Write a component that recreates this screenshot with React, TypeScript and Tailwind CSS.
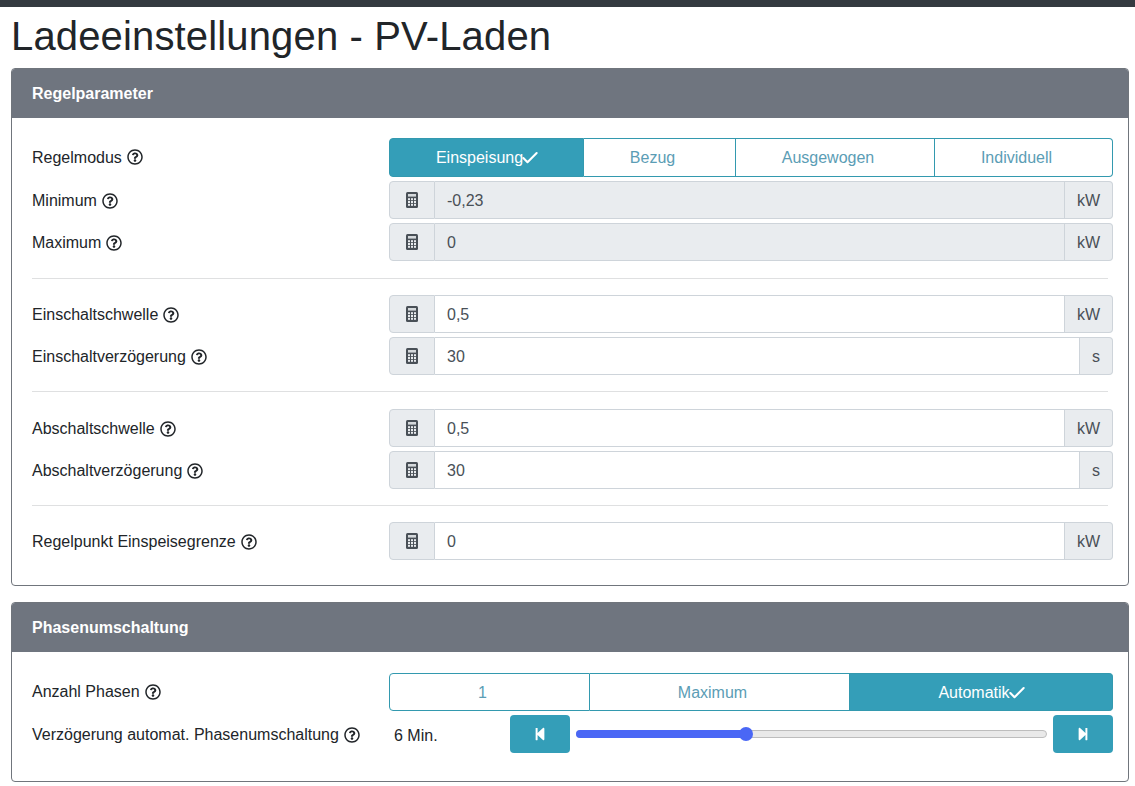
import React from 'react'
import { Check } from 'lucide-react'
import { FaRegQuestionCircle, FaStepBackward, FaStepForward } from 'react-icons/fa'

const Label = ({ text, nudge }: { text: string; nudge?: boolean }) => (
  <div className={`w-[357px] shrink-0 flex items-center gap-[5px] text-[16px] text-[#212529] ${nudge ? 'pt-[2px]' : ''}`}>
    <span>{text}</span>
    <FaRegQuestionCircle size={16} className="text-[#212529] -mt-[1px]" />
  </div>
)

const CalcIcon = () => (
  <svg width="12" height="16" viewBox="0 0 12 16">
    <rect width="12" height="16" rx="1.5" fill="#495057" />
    <rect x="2" y="2" width="8" height="2.6" fill="#d5d9dc" />
    {[6.2, 9, 11.8].map((y) =>
      [2, 5, 8].map((x) => <rect key={`${x}-${y}`} x={x} y={y} width="2" height="2" fill="#e9ecef" />)
    )}
  </svg>
)

const InputRow = ({ label, value, unit, disabled }: { label: string; value: string; unit: string; disabled?: boolean }) => (
  <div className="flex items-center -mr-[5px]">
    <Label text={label} nudge />
    <div className="flex-1 flex h-[38px] text-[16px] text-[#495057]">
      <div className="w-[46px] flex items-center justify-center bg-[#e9ecef] border border-[#ced4da] rounded-l-[4px]">
        <CalcIcon />
      </div>
      <div className={`flex-1 flex items-center pl-3 pt-[2px] border-y border-r border-[#ced4da] ${disabled ? 'bg-[#e9ecef]' : 'bg-white'}`}>
        {value}
      </div>
      <div className="flex items-center px-3 pt-[2px] bg-[#e9ecef] border-y border-r border-[#ced4da] rounded-r-[4px]">
        {unit}
      </div>
    </div>
  </div>
)

const Segment = ({ text, width, active, first, last, nudge }: { text: string; width: string; active?: boolean; first?: boolean; last?: boolean; nudge?: boolean }) => (
  <div
    className={`${width} flex items-center justify-center border-y border-[#3399af] ${nudge ? 'pt-[2px]' : ''} ${first ? 'border-l rounded-l-[4px]' : ''} ${last ? 'rounded-r-[4px]' : ''} border-r ${
      active ? 'bg-[#349eb8] text-white' : 'bg-white text-[#5b9db5] pr-[14px]'
    }`}
  >
    {text}
    {active && <Check size={20} strokeWidth={2.5} className="-mx-[3px]" />}
  </div>
)

const Card = ({ title, className, children }: { title: string; className: string; children: React.ReactNode }) => (
  <section className={`ml-[11px] mr-[6px] border border-[#70757c] rounded-[4px] overflow-hidden ${className}`}>
    <div className="h-[49px] bg-[#6f757f] flex items-center pl-5 text-[16px] font-bold text-white">{title}</div>
    {children}
  </section>
)

export default function App() {
  return (
    <div className="min-h-[786px] bg-white overflow-hidden font-['Liberation_Sans',Arial,sans-serif] leading-normal">
      <div className="h-[7px] bg-[#343a40]" />
      <h1 className="mx-[11px] mt-[5px] mb-[8px] h-[48px] text-[40px] leading-[48px] tracking-[0.15px] text-[#212529]">Ladeeinstellungen - PV-Laden</h1>

      <Card title="Regelparameter" className="h-[518px]">
        <div className="px-5 pt-5">
          <div className="flex items-center">
            <Label text="Regelmodus" />
            <div className="flex h-[39px] text-[16px]">
              <Segment text="Einspeisung" width="w-[195px]" active first />
              <Segment text="Bezug" width="w-[152px]" />
              <Segment text="Ausgewogen" width="w-[199px]" />
              <Segment text="Individuell" width="w-[178px]" last />
            </div>
          </div>
          <div className="flex flex-col gap-1 mt-1">
            <InputRow label="Minimum" value="-0,23" unit="kW" disabled />
            <InputRow label="Maximum" value="0" unit="kW" disabled />
          </div>
          <hr className="border-t border-[#dfe0e1] mt-[17px] mb-[16px]" />
          <div className="flex flex-col gap-1">
            <InputRow label="Einschaltschwelle" value="0,5" unit="kW" />
            <InputRow label="Einschaltverzögerung" value="30" unit="s" />
          </div>
          <hr className="border-t border-[#dfe0e1] mt-[16px] mb-[17px]" />
          <div className="flex flex-col gap-1">
            <InputRow label="Abschaltschwelle" value="0,5" unit="kW" />
            <InputRow label="Abschaltverzögerung" value="30" unit="s" />
          </div>
          <hr className="border-t border-[#dfe0e1] mt-[16px] mb-[16px]" />
          <InputRow label="Regelpunkt Einspeisegrenze" value="0" unit="kW" />
        </div>
      </Card>

      <Card title="Phasenumschaltung" className="h-[180px] mt-4">
        <div className="px-5 pt-[21px]">
          <div className="flex items-center">
            <Label text="Anzahl Phasen" />
            <div className="flex h-[38px] text-[16px]">
              <Segment text="1" width="w-[201px]" first nudge />
              <Segment text="Maximum" width="w-[260px]" nudge />
              <Segment text="Automatik" width="w-[263px]" active last nudge />
            </div>
          </div>
          <div className="flex items-center mt-1 h-[38px] -mr-[5px]">
            <Label text="Verzögerung automat. Phasenumschaltung" nudge />
            <div className="w-[121px] pl-[5px] pt-[3px] text-[16px] text-[#212529]">6 Min.</div>
            <button className="w-[60px] h-[38px] flex items-center justify-center bg-[#349eb8] text-white rounded-[4px]">
              <FaStepBackward size={14} />
            </button>
            <div className="flex-1 mx-[6px] h-[8px] relative rounded-full bg-[#e9e9e9] border border-[#bdbdbd]">
              <div className="absolute -left-px -top-px h-[8px] w-[170px] rounded-full bg-[#4a67f5]" />
              <div className="absolute left-[162px] -top-[4px] w-[14px] h-[14px] rounded-full bg-[#4a67f5]" />
            </div>
            <button className="w-[60px] h-[38px] flex items-center justify-center bg-[#349eb8] text-white rounded-[4px]">
              <FaStepForward size={14} />
            </button>
          </div>
        </div>
      </Card>
    </div>
  )
}
